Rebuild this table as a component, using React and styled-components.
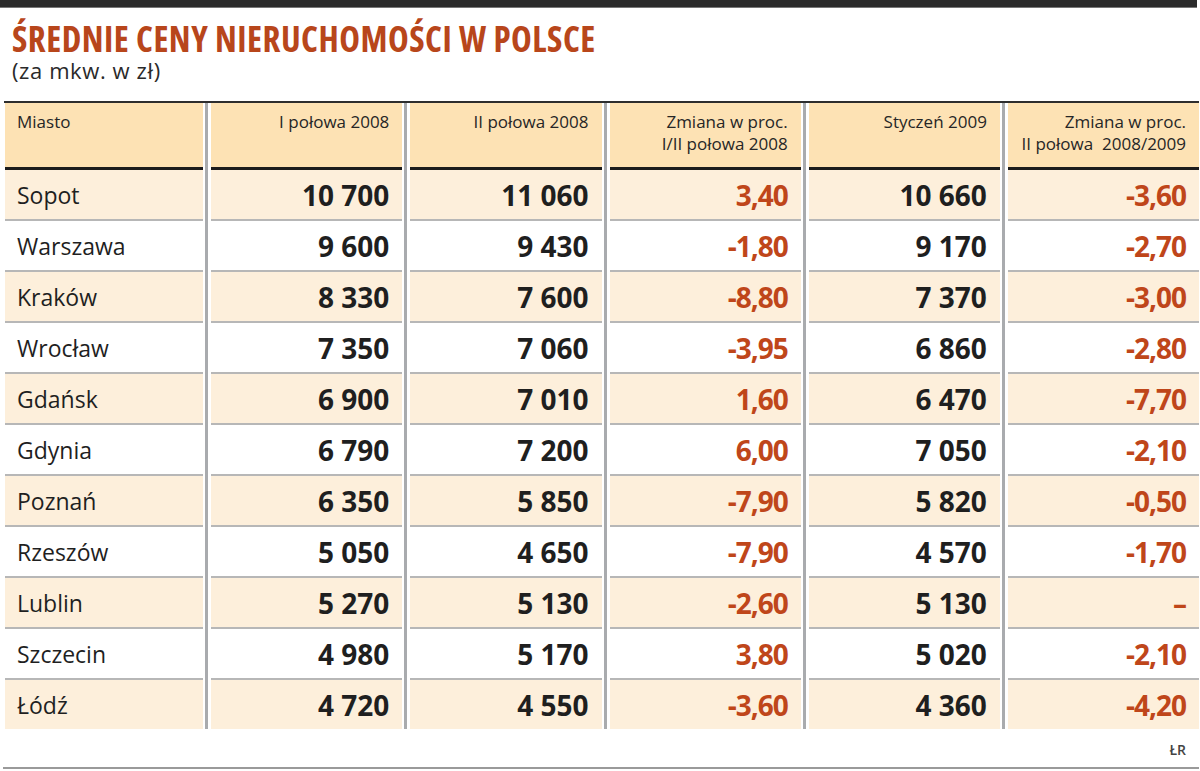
import styled, { createGlobalStyle } from 'styled-components';

// średnie ceny nieruchomości - tabela z 6 kolumnami, kolumny ułożone obok siebie
const GlobalStyle = createGlobalStyle`
  body {
    margin: 0;
    background: #fff;
    font-family: "Open Sans", "Liberation Sans", sans-serif;
    color: #222;
  }
`;

const rows = [
  ['Sopot', '10 700', '11 060', '3,40', '10 660', '-3,60'],
  ['Warszawa', '9 600', '9 430', '-1,80', '9 170', '-2,70'],
  ['Kraków', '8 330', '7 600', '-8,80', '7 370', '-3,00'],
  ['Wrocław', '7 350', '7 060', '-3,95', '6 860', '-2,80'],
  ['Gdańsk', '6 900', '7 010', '1,60', '6 470', '-7,70'],
  ['Gdynia', '6 790', '7 200', '6,00', '7 050', '-2,10'],
  ['Poznań', '6 350', '5 850', '-7,90', '5 820', '-0,50'],
  ['Rzeszów', '5 050', '4 650', '-7,90', '4 570', '-1,70'],
  ['Lublin', '5 270', '5 130', '-2,60', '5 130', '–'],
  ['Szczecin', '4 980', '5 170', '3,80', '5 020', '-2,10'],
  ['Łódź', '4 720', '4 550', '-3,60', '4 360', '-4,20'],
];

const columns = [
  { head: ['Miasto'], kind: 'city' },
  { head: ['I połowa 2008'], kind: 'num' },
  { head: ['II połowa 2008'], kind: 'num' },
  { head: ['Zmiana w proc.', 'I/II połowa 2008'], kind: 'pct' },
  { head: ['Styczeń 2009'], kind: 'num' },
  { head: ['Zmiana w proc.', 'II połowa\u00a0 2008/2009'], kind: 'pct' },
];

const App = () => {
  return (
    <Page>
      <GlobalStyle />
      <TopBar />
      <Title>ŚREDNIE CENY NIERUCHOMOŚCI W POLSCE</Title>
      <Subtitle>(za mkw. w zł)</Subtitle>

      <Table>
        {columns.map((col, ci) => (
          <ColumnGroup key={ci}>
            {ci > 0 && <Divider />}
            <Column>
              <HeadCell left={ci === 0}>
                {col.head.map((line, li) => (
                  <div key={li}>{line}</div>
                ))}
              </HeadCell>
              <HeadRule />
              {rows.map((r, ri) => (
                <Cell key={ri} shaded={ri % 2 === 0} last={ri === rows.length - 1} kind={col.kind}>
                  {r[ci]}
                </Cell>
              ))}
            </Column>
          </ColumnGroup>
        ))}
      </Table>

      <Source>ŁR</Source>
      <BottomRule />
    </Page>
  );
};

export default App;

const Page = styled.div`
  width: 1200px;
  display: flex;
  flex-direction: column;
`;

const TopBar = styled.div`
  height: 7px;
  margin-right: 3px;
  background: #2b2b2b;
  border-bottom: 1px solid #777;
`;

const Title = styled.h1`
  margin: 12px 0 0 12px;
  font-size: 35px;
  line-height: 38px;
  font-weight: 700;
  font-stretch: 75%;
  letter-spacing: 0.5px;
  color: #b8461b;
`;

const Subtitle = styled.div`
  margin: 0 0 0 12px;
  font-size: 22px;
  line-height: 24px;
  letter-spacing: 0.6px;
  color: #2a2a2a;
`;

const Table = styled.div`
  display: flex;
  margin: 19px 1px 0 4px;
  border-top: 2px solid #2e2e2e;
`;

const ColumnGroup = styled.div`
  display: flex;
  flex: 1;
`;

const Divider = styled.div`
  flex: 0 0 3px;
  margin: 0 2px;
  background: #a9abae;
`;

const Column = styled.div`
  flex: 1;
  display: flex;
  flex-direction: column;
  margin-left: 1px;
`;

const HeadCell = styled.div`
  height: 64px;
  box-sizing: border-box;
  padding: 8px 13px 0 12px;
  background: #fde2b4;
  font-size: 17px;
  line-height: 22px;
  white-space: nowrap;
  color: #262626;
  text-align: ${(p) => (p.left ? 'left' : 'right')};
`;

const HeadRule = styled.div`
  height: 3px;
  background: #1c1c1c;
`;

const Cell = styled.div`
  height: 49px;
  display: flex;
  align-items: center;
  justify-content: ${(p) => (p.kind === 'city' ? 'flex-start' : 'flex-end')};
  padding: 0 13px 0 12px;
  background: ${(p) => (p.shaded ? '#fdefdb' : '#fff')};
  border-bottom: ${(p) => (p.last ? 'none' : '2px solid #b7b7b7')};
  font-size: ${(p) => (p.kind === 'city' ? '23px' : '28px')};
  font-weight: ${(p) => (p.kind === 'city' ? 400 : 700)};
  letter-spacing: ${(p) => (p.kind === 'pct' ? '-1px' : '0')};
  color: ${(p) => (p.kind === 'pct' ? '#bf461a' : '#1f1f1f')};
`;

const Source = styled.div`
  margin: 12px 14px 0 0;
  text-align: right;
  font-size: 14px;
  line-height: 18px;
  font-weight: 600;
  color: #444;
`;

const BottomRule = styled.div`
  height: 2px;
  margin: 8px 1px 0 3px;
  background: #9a9a9a;
`;
